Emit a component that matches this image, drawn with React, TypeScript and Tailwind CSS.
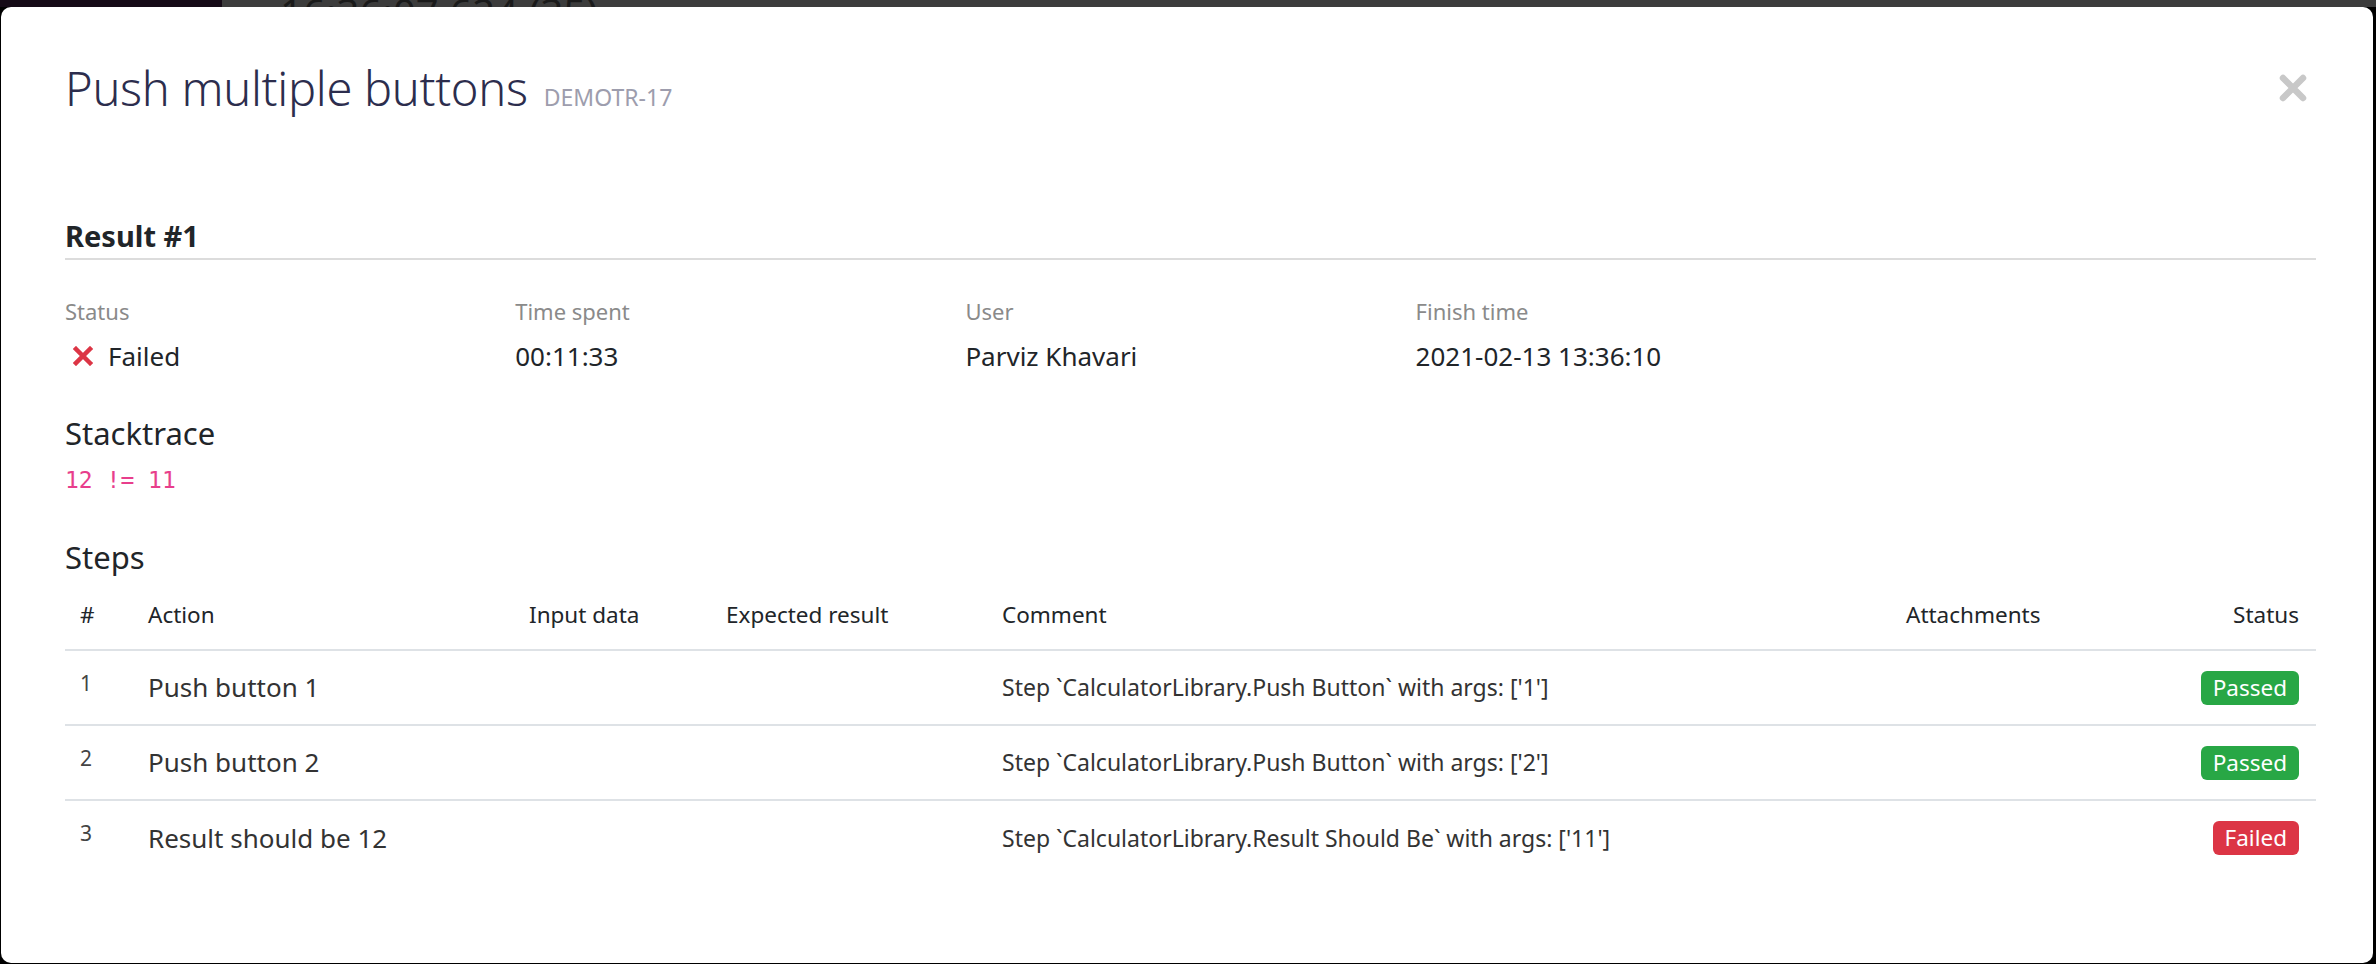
const steps = [
  { n: 1, action: "Push button 1", comment: "Step `CalculatorLibrary.Push Button` with args: ['1']", ok: true },
  { n: 2, action: "Push button 2", comment: "Step `CalculatorLibrary.Push Button` with args: ['2']", ok: true },
  { n: 3, action: "Result should be 12", comment: "Step `CalculatorLibrary.Result Should Be` with args: ['11']", ok: false },
];

const info = [
  { label: "Status", value: "Failed", failed: true },
  { label: "Time spent", value: "00:11:33" },
  { label: "User", value: "Parviz Khavari" },
  { label: "Finish time", value: "2021-02-13 13:36:10" },
];

function RedX() {
  return (
    <svg width="20" height="20" viewBox="0 0 20 20" className="ml-[8px] mr-[15px] shrink-0">
      <path d="M3 3 L17 17 M17 3 L3 17" stroke="#dc3545" strokeWidth="4.5" strokeLinecap="square" />
    </svg>
  );
}

export default function App() {
  return (
    <div className="w-[2376px] h-[964px] bg-black overflow-hidden" style={{ fontFamily: "'Noto Sans', sans-serif" }}>
      {/* page behind the modal */}
      <div className="h-[7px] flex overflow-hidden">
        <div className="w-[222px] bg-[#150a16]" />
        <div className="flex-1 bg-[#3c3c3c] relative">
          <span className="absolute left-[58px] bottom-[-26px] text-[40px] leading-[40px] text-[#1a1a1a]">
            16:36:07.624 (35)
          </span>
        </div>
      </div>

      {/* Modal */}
      <div className="ml-[1px] w-[2372px] h-[956px] bg-white rounded-[10px] pl-[64px] pr-[57px] pt-[54px]">
        <div className="flex items-center justify-between">
          <div className="flex items-baseline">
            <h1 className="text-[47px] leading-[54px] text-[#2c2d4d] font-light tracking-[-0.3px]">Push multiple buttons</h1>
            <span className="ml-[16px] text-[23px] text-[#9d9dad]">DEMOTR-17</span>
          </div>
          <svg width="30" height="30" viewBox="0 0 30 30" className="mr-[8px]">
            <path d="M5 5 L25 25 M25 5 L5 25" stroke="#c8c8c8" strokeWidth="6.5" strokeLinecap="round" />
          </svg>
        </div>

        <h2 className="mt-[103px] text-[29px] leading-[36px] font-bold text-[#212529] pb-[4px] border-b-2 border-[#dcdcdc]">
          Result #1
        </h2>

        <div className="grid grid-cols-5">
          {info.map((i) => (
            <div key={i.label}>
              <div className="mt-[36px] text-[22px] leading-[30px] text-[#8a8a8a]">{i.label}</div>
              <div className="mt-[12px] flex items-center text-[26px] leading-[36px] text-[#212529]">
                {i.failed && <RedX />}
                {i.value}
              </div>
            </div>
          ))}
        </div>

        <h3 className="mt-[39px] text-[31px] leading-[40px] text-[#212529]">Stacktrace</h3>
        <code className="block mt-[12px] text-[23px] leading-[30px] text-[#e83e8c]" style={{ fontFamily: "'DejaVu Sans Mono', monospace" }}>
          12 != 11
        </code>

        <h3 className="mt-[42px] text-[31px] leading-[40px] text-[#212529]">Steps</h3>

        <table className="mt-[3px] w-full border-collapse text-[#212529]">
          <thead>
            <tr className="h-[70px] border-b-2 border-[#dee2e6] text-[22.5px] text-left">
              <th className="w-[68px] pl-[15px] font-normal">#</th>
              <th className="w-[381px] pl-[15px] font-normal">Action</th>
              <th className="w-[197px] pl-[15px] font-normal">Input data</th>
              <th className="w-[276px] pl-[15px] font-normal">Expected result</th>
              <th className="w-[904px] pl-[15px] font-normal">Comment</th>
              <th className="w-[239px] pl-[15px] font-normal">Attachments</th>
              <th className="pr-[17px] font-normal text-right">Status</th>
            </tr>
          </thead>
          <tbody>
            {steps.map((s, idx) => (
              <tr key={s.n} className={"h-[75px] " + (idx > 0 ? "border-t-2 border-[#dee2e6]" : "")}>
                <td className="pl-[15px] text-[21px] text-[#444] align-middle pb-[8px]">{s.n}</td>
                <td className="pl-[15px] text-[26px] text-[#333]">{s.action}</td>
                <td />
                <td />
                <td className="pl-[15px] text-[23px] text-[#333]">{s.comment}</td>
                <td />
                <td className="pr-[17px] text-right">
                  <span
                    className={
                      "inline-flex items-center h-[34px] px-[12px] rounded-[6px] text-[22.5px] text-white " +
                      (s.ok ? "bg-[#28a745]" : "bg-[#dc3545]")
                    }
                  >
                    {s.ok ? "Passed" : "Failed"}
                  </span>
                </td>
              </tr>
            ))}
          </tbody>
        </table>
      </div>
    </div>
  );
}
